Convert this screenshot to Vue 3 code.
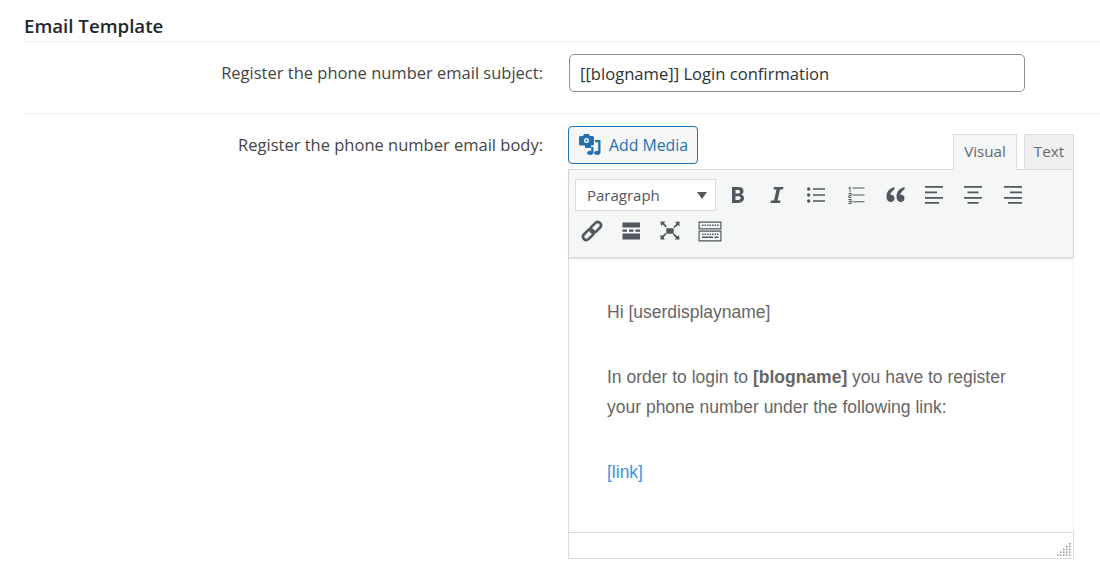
<template>
  <div class="page">
    <h2 class="section-title">Email Template</h2>

    <div class="row row-subject">
      <label class="row-label">Register the phone number email subject:</label>
      <div class="row-field">
        <input class="subject-input" type="text" value="[[blogname]] Login confirmation" />
      </div>
    </div>

    <div class="row row-body">
      <label class="row-label">Register the phone number email body:</label>
      <div class="row-field editor-wrap">
        <div class="editor-tools">
          <button class="add-media" type="button">
            <svg width="22" height="22" viewBox="0 0 22 22">
              <path
                fill="#2271b1"
                fill-rule="evenodd"
                d="M1.500 2H4l1-2h5l1 2h2.500c.8 0 1.500.7 1.500 1.500V10c0 .8-.7 1.500-1.500 1.500H12V14H6v-2.500H1.500C.7 11.500 0 10.800 0 10V3.500C0 2.700.7 2 1.500 2zM7.500 4a2.500 2.500 0 1 0 0 5 2.500 2.500 0 0 0 0-5z"
              />
              <circle cx="7.500" cy="6.500" r="1.100" fill="#2271b1" />
              <path
                fill="#2271b1"
                d="M21.500 6v12.500c0 1.500-1.300 2.500-3 2.500S15 20.100 15 19s1.400-2.200 3-2.200c.4 0 .8 0 1.200.2V8.300H16V6zM14.500 13v5.800c0 1.300-1.300 2.200-3 2.200S8 20.100 8 19s1.400-2.200 3-2.200c.4 0 .8 0 1.200.2v-4z"
              />
            </svg>
            <span>Add Media</span>
          </button>
          <div class="tabs">
            <span class="tab tab-active">Visual</span>
            <span class="tab tab-text">Text</span>
          </div>
        </div>

        <div class="editor">
          <div class="toolbar">
            <div class="toolbar-row">
              <div class="format-select">
                <span>Paragraph</span>
                <i class="caret"></i>
              </div>
              <span class="tool" v-for="icon in rowOne" :key="icon.name">
                <svg width="22" height="22" viewBox="0 0 22 22">
                  <path :d="icon.d" fill="#50575e" fill-rule="evenodd" />
                </svg>
              </span>
            </div>
            <div class="toolbar-row second">
              <span class="tool" v-for="icon in rowTwo" :key="icon.name">
                <svg width="22" height="22" viewBox="0 0 22 22">
                  <path
                    v-if="icon.line"
                    :d="icon.d"
                    fill="none"
                    stroke="#50575e"
                    stroke-width="2.6"
                  />
                  <path v-else :d="icon.d" fill="#50575e" fill-rule="evenodd" />
                </svg>
              </span>
            </div>
          </div>

          <div class="editor-content">
            <p>Hi [userdisplayname]</p>
            <p>In order to login to <strong>[blogname]</strong> you have to register your phone number under the following link:</p>
            <p><a href="#" @click.prevent>[link]</a></p>
          </div>

          <div class="status-bar">
            <svg width="14" height="13" viewBox="0 0 14 13">
              <rect
                v-for="dot in gripDots"
                :key="dot.x + '-' + dot.y"
                :x="dot.x"
                :y="dot.y"
                width="1.5"
                height="1.5"
                fill="#8a8f94"
              />
            </svg>
          </div>
        </div>
      </div>
    </div>
  </div>
</template>

<script setup>
const rowOne = [
  {
    name: "bold",
    d: "M5 3h6.500c3.200 0 5 1.500 5 4 0 1.700-.9 2.900-2.400 3.400v.1c1.800.4 2.900 1.700 2.900 3.600 0 2.900-2 4.900-5.500 4.900H5zM8.500 6v3.600h2.300c1.500 0 2.200-.6 2.200-1.800S12.300 6 10.800 6zM8.500 12.300V16h2.700c1.600 0 2.400-.7 2.400-1.900s-.8-1.800-2.400-1.800z",
  },
  {
    name: "italic",
    d: "M8 3h9.500L17 5.500h-3l-2.500 11h3L14 19H4.500l.5-2.500h3l2.500-11h-3z",
  },
  {
    name: "bullist",
    d: "M3.700 3.300a1.700 1.700 0 1 0 0 3.400 1.700 1.700 0 0 0 0-3.400zM8 4.300h12v1.400H8zM3.700 9.300a1.700 1.700 0 1 0 0 3.400 1.700 1.700 0 0 0 0-3.400zM8 10.300h12v1.400H8zM3.700 15.300a1.700 1.700 0 1 0 0 3.400 1.700 1.700 0 0 0 0-3.400zM8 16.300h12v1.400H8z",
  },
  {
    name: "numlist",
    d: "M4.500 2.700h1v5h-1zM3.500 3.500h1v1h-1zM3.500 9h3v1h-3zM5.500 10h1v1h-1zM3.500 11h3v1h-3zM3.500 12h1v1h-1zM3.500 13h3v1h-3zM3.500 15h3v1h-3zM5.500 16h1v1h-1zM3.500 17h3v1h-3zM5.500 18h1v1h-1zM3.500 19h3v1h-3zM7.500 3.500h12v1h-12zM7.500 10.500h12v1h-12zM7.500 17.300h12v1h-12z",
  },
  {
    name: "blockquote",
    d: "M10.500 3c-4 1-8 4-8 9.500 0 3 1.700 5.500 4.300 5.500 2.200 0 3.700-1.700 3.700-3.800 0-2-1.400-3.500-3.200-3.500-.4 0-.7 0-1 .2.300-2 1.900-4 4.200-5.300zM20.500 3c-4 1-8 4-8 9.500 0 3 1.700 5.500 4.300 5.500 2.200 0 3.700-1.700 3.700-3.800 0-2-1.400-3.500-3.200-3.500-.4 0-.7 0-1 .2.300-2 1.900-4 4.200-5.300z",
  },
  {
    name: "alignleft",
    d: "M2 2h18v1.700H2zM2 7.500h12v1.700H2zM2 13h18v1.700H2zM2 18h14v1.700H2z",
  },
  {
    name: "aligncenter",
    d: "M2 2h18v1.700H2zM5.500 7.500h11v1.700h-11zM2 13h18v1.700H2zM5.500 18h11v1.700h-11z",
  },
  {
    name: "alignright",
    d: "M2 2h18v1.700H2zM8 7.500h12v1.700H8zM2 13h18v1.700H2zM6 18h14v1.700H6z",
  },
];

const rowTwo = [
  {
    name: "link",
    line: true,
    d: "M10.170 7.170L14.470 2.870A3.300 3.300 0 0 1 19.130 7.530L14.830 11.830A3.300 3.300 0 0 1 10.170 7.170zM7.170 10.170L2.870 14.470A3.300 3.300 0 0 0 7.530 19.130L11.830 14.830A3.300 3.300 0 0 0 7.170 10.170z",
  },
  {
    name: "more",
    d: "M2.500 2.500H20v5H2.500zM2.500 9.500H7v2.200H2.500zM9 9.500h4.500v2.200H9zM15.500 9.500H20v2.200h-4.500zM2.500 13.500H20v6H2.500z",
  },
  {
    name: "fullscreen",
    d: "M7.300 8.300h7.400v5.400H7.300zM1.500 1.500h5l-1.500 1.500 3 3.500-1 1-3.500-3-1.500 1.500zM20.500 1.500v5L19 5l-3.500 3-1-1 3-3.500L16 2zM1.500 19.500v-5L3 16l3.500-3 1 1-3 3.500L6 19.500zM20.500 19.500h-5L17 18l-3-3.500 1-1 3.500 3 1.500-1.500z",
  },
  {
    name: "kitchensink",
    d: "M-.5 1.500h23v8h-23zM.7 2.700v5.600h20.600V2.700zM3 4.500h1.500V6H3zM5.500 4.500H7V6H5.500zM8 4.500h1.500V6H8zM10.500 4.500H12V6h-1.500zM13 4.500h1.500V6H13zM15.500 4.500H17V6h-1.500zM18 4.500h1.500V6H18zM-.5 10.500h23v11h-23zM.7 11.700v8.600h20.600v-8.600zM3 13.500h1.500V15H3zM5.500 13.500H7V15H5.500zM8 13.500h1.500V15H8zM10.500 13.500H12V15h-1.500zM13 13.500h1.500V15H13zM15.500 13.500H17V15h-1.500zM18 13.500h1.500V15H18zM3 16.500h11V18H3zM15.500 16.500h4V18h-4z",
  },
];

// triangular resize grip
const gripDots = [];
for (let row = 0; row < 5; row++) {
  for (let col = 4 - row; col < 5; col++) {
    gripDots.push({ x: col * 3, y: row * 2.8 });
  }
}
</script>

<style>
html,
body {
  background: #fff;
}
</style>

<style scoped>
.page {
  width: 1100px;
  height: 580px;
  overflow: hidden;
  font-family: "Open Sans", "Noto Sans", sans-serif;
  color: #444;
  box-sizing: border-box;
  padding: 14px 0 0 24px;
}

.section-title {
  margin: 0;
  font-size: 18.7px;
  line-height: 23px;
  font-weight: 600;
  color: #23282d;
  padding-bottom: 4px;
  border-bottom: 1px solid #eee;
}

.row {
  display: flex;
  border-bottom: 1px solid #eee;
}

.row-label {
  width: 519px;
  text-align: right;
  font-size: 16.5px;
  line-height: 38px;
  box-sizing: border-box;
}

.row-field {
  margin-left: 26px;
}

.row-subject {
  height: 72px;
  padding-top: 12px;
  box-sizing: border-box;
}

.subject-input {
  width: 456px;
  height: 38px;
  box-sizing: border-box;
  border: 1px solid #8c8f94;
  border-radius: 5px;
  padding: 1px 10px 0;
  font: 16.6px "Open Sans", "Noto Sans", sans-serif;
  color: #2c3338;
  outline: none;
  background: #fff;
}

.row-body {
  border-bottom: 0;
  padding-top: 12px;
}

.editor-wrap {
  width: 506px;
  margin-left: 25px;
}

.editor-tools {
  display: flex;
  justify-content: space-between;
  align-items: flex-end;
  height: 44px;
}

.add-media {
  align-self: flex-start;
  display: flex;
  align-items: center;
  gap: 8px;
  width: 130px;
  height: 38px;
  box-sizing: border-box;
  padding: 0 0 0 10px;
  border: 1px solid #2271b1;
  border-radius: 4px;
  background: #f6f7f7;
  color: #2271b1;
  font: 15.8px "Open Sans", "Noto Sans", sans-serif;
  white-space: nowrap;
}

.tabs {
  display: flex;
  align-items: flex-start;
  gap: 7px;
}

.tab {
  height: 35px;
  box-sizing: border-box;
  text-align: center;
  font-size: 15.2px;
  line-height: 32px;
  border: 1px solid #dcdcde;
  border-bottom: 0;
  background: #f0f0f1;
  color: #646970;
}

.tab-active {
  width: 64px;
  height: 36px;
  position: relative;
  z-index: 1;
  background: #f5f6f6;
}

.tab-text {
  width: 50px;
}

.editor {
  height: 390px;
  border: 1px solid #dcdcde;
  box-sizing: border-box;
  margin-top: -1px;
  display: flex;
  flex-direction: column;
}

.toolbar {
  height: 88px;
  flex: none;
  box-sizing: border-box;
  background: #f5f6f6;
  padding: 9px 6px 0;
  border-bottom: 1px solid #dcdcde;
  box-shadow: 0 1px 2px rgba(0, 0, 0, 0.14);
  position: relative;
}

.toolbar-row {
  display: flex;
  align-items: flex-start;
  height: 33px;
}

.toolbar-row.second {
  height: 38px;
  align-items: center;
  margin-left: -3px;
}

.format-select {
  width: 141px;
  height: 32px;
  box-sizing: border-box;
  background: #fff;
  border: 1px solid #dcdcde;
  display: flex;
  align-items: center;
  justify-content: space-between;
  padding: 0 8px 0 11px;
  font-size: 15px;
  color: #50575e;
  margin-right: 2px;
}

.caret {
  width: 0;
  height: 0;
  border-left: 5px solid transparent;
  border-right: 5px solid transparent;
  border-top: 7px solid #50575e;
}

.tool {
  width: 39.3px;
  height: 32px;
  display: flex;
  align-items: center;
  justify-content: center;
}

.tool svg {
  overflow: visible;
}

.editor-content {
  flex: 1;
  margin-right: -1px;
  border-right: 1px solid #f3f3f3;
  padding: 39px 49px 0 38px;
  font-family: "Liberation Sans", Arial, sans-serif;
  font-size: 17.5px;
  line-height: 30px;
  color: #666;
  background: #fff;
}

.editor-content p {
  margin: 0 0 35px;
}

.editor-content a {
  color: #3b94ee;
  text-decoration: none;
}

.status-bar {
  height: 26px;
  flex: none;
  box-sizing: border-box;
  border-top: 1px solid #dcdcde;
  display: flex;
  justify-content: flex-end;
  align-items: flex-end;
  padding: 0 2px 2px 0;
}
</style>
